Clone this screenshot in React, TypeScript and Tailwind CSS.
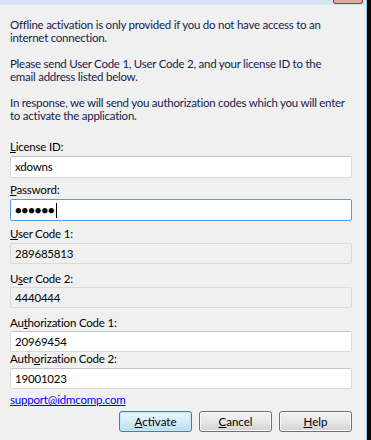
import React from "react";

const font = { fontFamily: 'Lato, "Noto Sans", sans-serif' };

function Label({ pre, u, post, className = "" }: { pre: string; u: string; post: string; className?: string }) {
  return (
    <div className={`h-[14px] leading-[14px] text-[11.5px] tracking-[-0.2px] text-black whitespace-nowrap shrink-0 ${className}`}>
      {pre}
      <span className="underline underline-offset-1">{u}</span>
      {post}
    </div>
  );
}

function Field({ value, disabled, focused, className = "" }: { value: React.ReactNode; disabled?: boolean; focused?: boolean; className?: string }) {
  const look = focused
    ? "bg-white border-[#569de5]"
    : disabled
    ? "bg-[#f0f0f0] border-[#d9d9d9]"
    : "bg-white border-[#d5dbe2] border-t-[#c3c7cd]";
  return (
    <div className={`w-[342px] shrink-0 border rounded-[2px] flex items-center pl-[4px] text-[11.5px] tracking-[-0.2px] text-black ${look} ${className}`}>
      {value}
    </div>
  );
}

function Button({ pre, u, post, primary }: { pre: string; u: string; post: string; primary?: boolean }) {
  return (
    <button
      className={`w-[73px] h-[21px] rounded-[3px] border text-[11.5px] text-black leading-none flex items-center justify-center ${
        primary
          ? "border-[#3c7fb1] bg-gradient-to-b from-[#eaf6fd] via-[#d6ebf8] to-[#bcdcf0] shadow-[inset_0_0_0_1px_#c8e8f8]"
          : "border-[#707070] bg-gradient-to-b from-[#f2f2f2] via-[#e8e8e8] to-[#d2d2d2] shadow-[inset_0_0_0_1px_#fbfbfb]"
      }`}
    >
      {pre}
      <span className="underline underline-offset-1">{u}</span>
      {post}
    </button>
  );
}

export default function App() {
  return (
    <div className="w-[371px] h-[440px] flex overflow-hidden" style={font}>
      <div className="flex-1 bg-[#f0f0f0] flex flex-col">
        {/* title bar edge */}
        <div className="relative h-[5px] shrink-0 bg-[#d6e5f5]">
          <div className="absolute left-[333px] top-0 w-[30px] h-[4px] rounded-b-[3px] border border-t-0 border-[#9c3b33] bg-[#e0a8a0]" />
        </div>

        <div className="pl-[10px] flex flex-col">
          <p className="mt-[13px] text-[11.5px] tracking-[-0.25px] leading-[13px] text-[#14224f] whitespace-nowrap">
            Offline activation is only provided if you do not have access to an
            <br />
            internet connection.
          </p>
          <p className="mt-[13px] text-[11.5px] tracking-[-0.25px] leading-[13px] text-[#14224f] whitespace-nowrap">
            Please send User Code 1, User Code 2, and your license ID to the
            <br />
            email address listed below.
          </p>
          <p className="mt-[13px] text-[11.5px] tracking-[-0.25px] leading-[13px] text-[#14224f] whitespace-nowrap">
            In response, we will send you authorization codes which you will enter
            <br />
            to activate the application.
          </p>

          <Label className="mt-[18px]" pre="" u="L" post="icense ID:" />
          <Field className="mt-[2px] h-[22px]" value="xdowns" />

          <Label className="mt-[5px]" pre="" u="P" post="assword:" />
          <Field
            className="mt-[2px] h-[22px]"
            focused
            value={
              <span className="flex items-center">
                <span className="text-[11px] tracking-[0px]">●●●●●●</span>
                <span className="ml-[1px] w-px h-[15px] bg-black" />
              </span>
            }
          />

          <Label className="mt-[6px]" pre="" u="U" post="ser Code 1:" />
          <Field className="mt-[2px] h-[21px]" disabled value="289685813" />

          <Label className="mt-[8px]" pre="U" u="s" post="er Code 2:" />
          <Field className="mt-[1px] h-[21px]" disabled value="4440444" />

          <Label className="mt-[8px]" pre="Au" u="t" post="horization Code 1:" />
          <Field className="mt-[1px] h-[21px]" value="20969454" />

          <Label pre="Auth" u="o" post="rization Code 2:" />
          <Field className="mt-[2px] h-[21px]" value="19001023" />

          <a href="#" className="mt-[4px] h-[14px] leading-[14px] text-[11.5px] tracking-[-0.2px] text-[#0000ff] underline w-fit">
            support@idmcomp.com
          </a>

          <div className="mt-[4px] w-[342px] flex justify-end gap-[7px]">
            <Button primary pre="" u="A" post="ctivate" />
            <Button pre="" u="C" post="ancel" />
            <Button pre="" u="H" post="elp" />
          </div>
        </div>
      </div>
      {/* window frame edge */}
      <div className="w-px bg-[#9cc4e8]" />
      <div className="w-[4px] bg-[#0a0a0a]" />
    </div>
  );
}
